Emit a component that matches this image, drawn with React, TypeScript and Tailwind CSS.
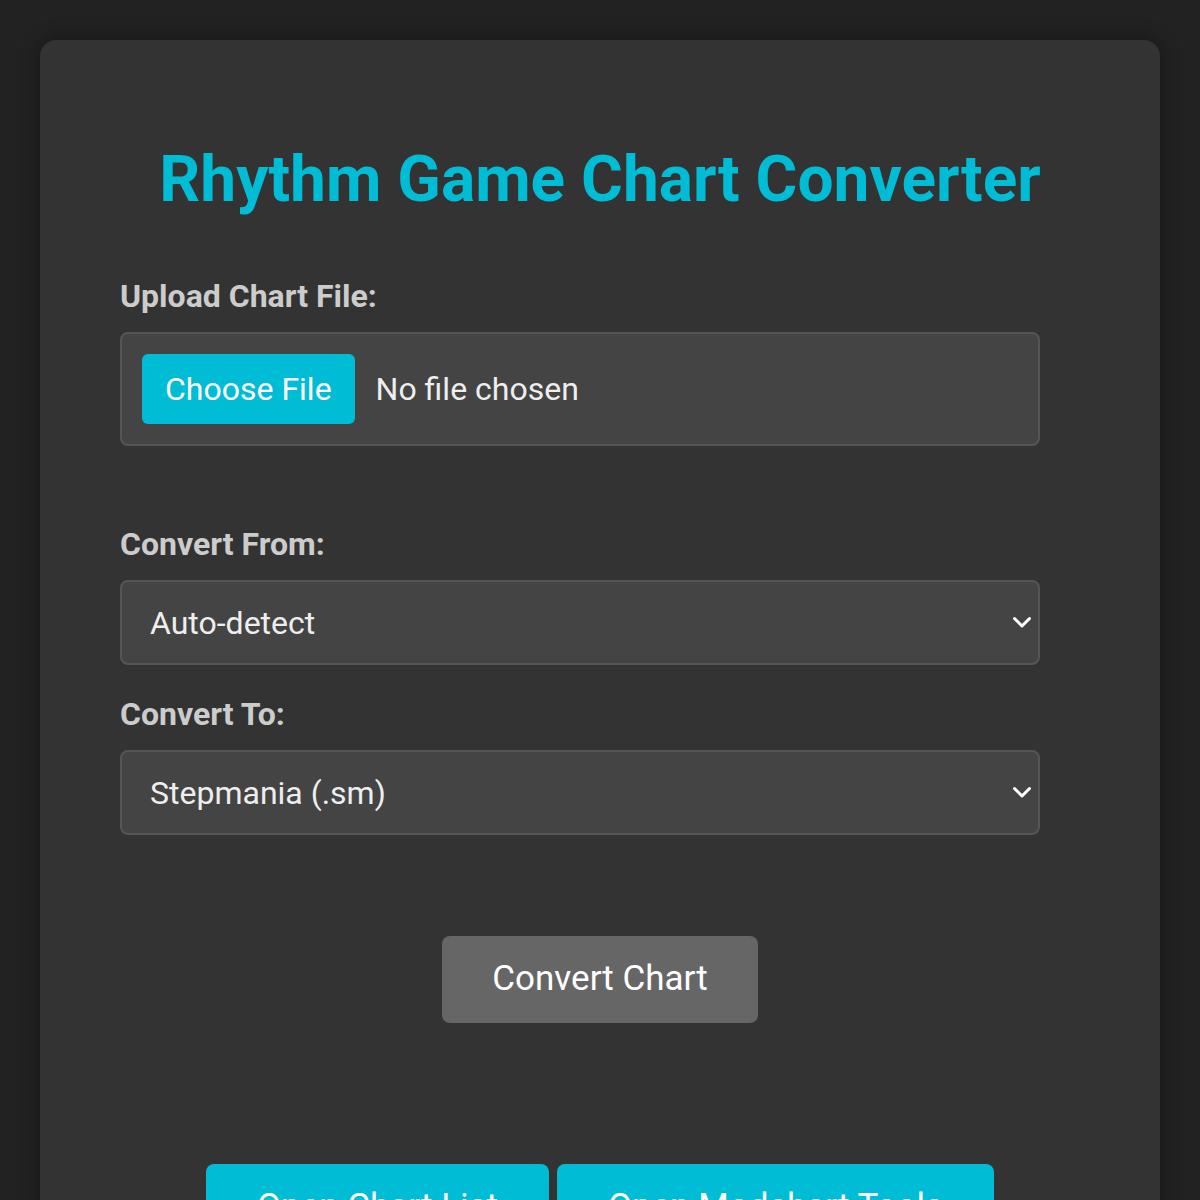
import React, { useState } from 'react';

const formats = [
  { value: 'auto', label: 'Auto-detect' },
  { value: 'sm', label: 'Stepmania (.sm)' },
  { value: 'osu', label: 'osu!mania (.osu)' },
  { value: 'chart', label: 'Clone Hero (.chart)' },
];

const Chevron = () => (
  <svg
    className="pointer-events-none absolute right-[8px] top-1/2 -translate-y-1/2"
    width="20"
    height="20"
    viewBox="0 0 20 20"
    fill="none"
  >
    <path d="M2.5 5.5l7.5 7.5 7.5-7.5" stroke="#ffffff" strokeWidth="3" strokeLinecap="round" strokeLinejoin="round" />
  </svg>
);

export default function App() {
  const [fileName, setFileName] = useState<string | null>(null);
  const [from, setFrom] = useState('auto');
  const [to, setTo] = useState('sm');

  return (
    <div className="min-h-[1200px] bg-[#222222] pt-10 px-10 font-['Roboto',sans-serif]">
      <div className="bg-[#333333] rounded-[16px] shadow-[0_0_20px_rgba(0,0,0,0.4)] px-20 pt-[102px] pb-20">
        <h1 className="text-center text-[64px] leading-[76px] font-bold text-[#00bcd4]">
          Rhythm Game Chart Converter
        </h1>

        <label className="block mt-[59px] text-[32px] leading-[38px] font-bold text-[#cccccc]">
          Upload Chart File:
        </label>
        <div className="mt-[17px] w-[920px] flex items-center bg-[#444444] border-2 border-[#555555] rounded-[8px] p-5">
          <label className="cursor-pointer bg-[#00bcd4] text-white text-[32px] leading-[70px] h-[70px] px-[23px] rounded-[6px]">
            Choose File
            <input
              type="file"
              className="hidden"
              onChange={(e) => setFileName(e.target.files?.[0]?.name ?? null)}
            />
          </label>
          <span className="ml-[21px] text-[32px] text-[#eeeeee]">{fileName ?? 'No file chosen'}</span>
        </div>

        <label className="block mt-[79px] text-[32px] leading-[38px] font-bold text-[#cccccc]">
          Convert From:
        </label>
        <div className="relative mt-[17px] w-[920px]">
          <select
            value={from}
            onChange={(e) => setFrom(e.target.value)}
            className="appearance-none w-full h-[85px] bg-[#444444] border-2 border-[#555555] rounded-[8px] pl-7 text-[32px] text-[#eeeeee] outline-none"
          >
            {formats.map((f) => (
              <option key={f.value} value={f.value}>
                {f.label}
              </option>
            ))}
          </select>
          <Chevron />
        </div>

        <label className="block mt-[30px] text-[32px] leading-[38px] font-bold text-[#cccccc]">
          Convert To:
        </label>
        <div className="relative mt-[17px] w-[920px]">
          <select
            value={to}
            onChange={(e) => setTo(e.target.value)}
            className="appearance-none w-full h-[85px] bg-[#444444] border-2 border-[#555555] rounded-[8px] pl-7 text-[32px] text-[#eeeeee] outline-none"
          >
            {formats
              .filter((f) => f.value !== 'auto')
              .map((f) => (
                <option key={f.value} value={f.value}>
                  {f.label}
                </option>
              ))}
          </select>
          <Chevron />
        </div>

        <div className="mt-[101px] flex justify-center">
          <button className="w-[316px] h-[87px] bg-[#666666] text-white text-[35px] rounded-[8px]">
            Convert Chart
          </button>
        </div>

        <div className="mt-[141px] flex justify-center gap-2">
          <button className="h-[87px] px-[51px] bg-[#00bcd4] text-white text-[35px] rounded-[8px]">
            Open Chart List
          </button>
          <button className="h-[87px] px-[51px] bg-[#00bcd4] text-white text-[35px] rounded-[8px]">
            Open Modchart Tools
          </button>
        </div>
      </div>
    </div>
  );
}
